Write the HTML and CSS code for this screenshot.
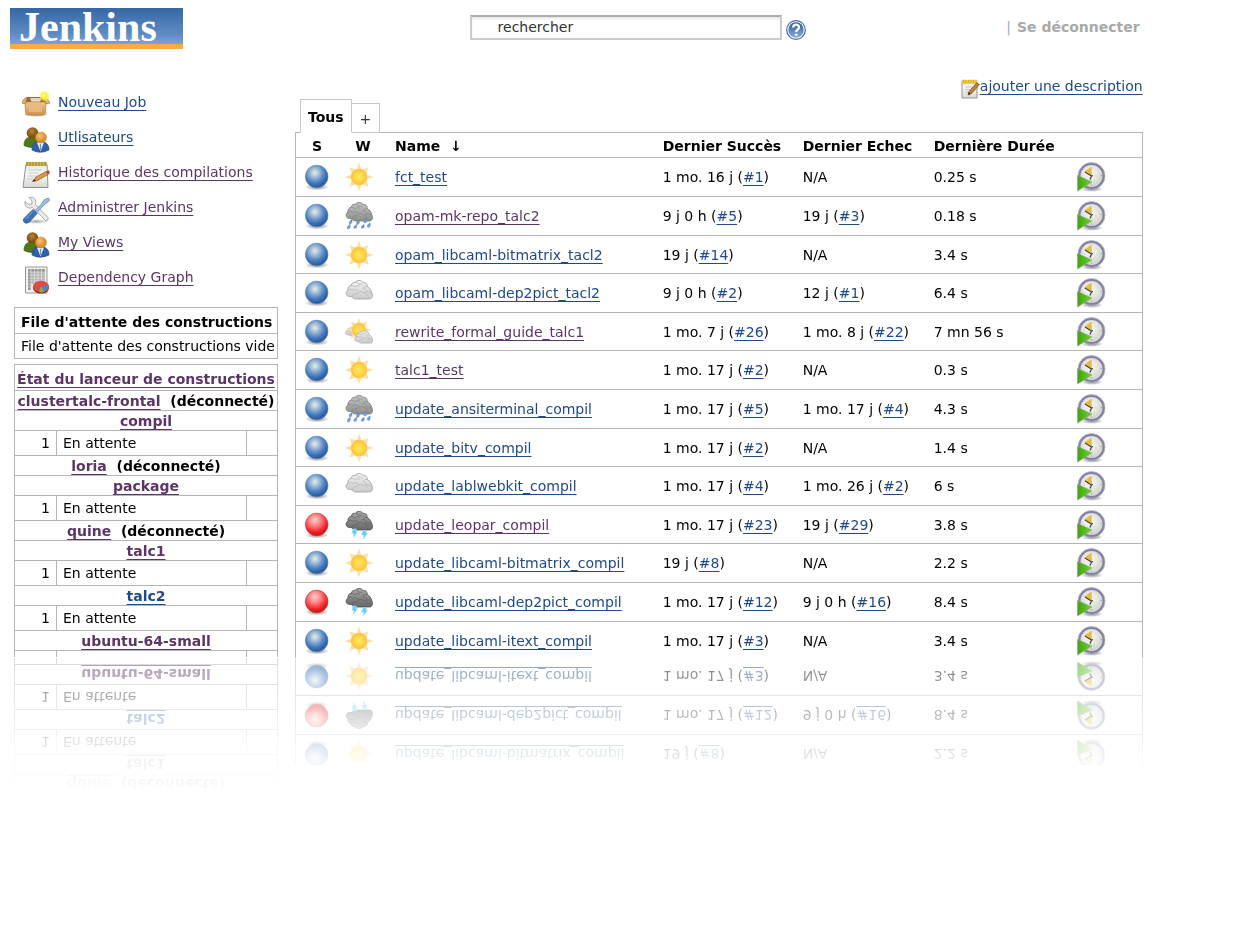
FILE: index.html
```
<!DOCTYPE html>
<html lang="fr">
<head>
<meta charset="utf-8">
<title>Tableau de bord [Jenkins]</title>
<link rel="stylesheet" href="styles.css">
</head>
<body>
<svg class="sprite" aria-hidden="true">
  <defs>
    <radialGradient id="g-blue" cx=".42" cy=".34" r=".62"><stop offset="0" stop-color="#e9eedd"/><stop offset=".3" stop-color="#a4bedb"/><stop offset=".7" stop-color="#4a7fc0"/><stop offset="1" stop-color="#295c9f"/></radialGradient>
    <radialGradient id="g-red" cx=".42" cy=".3" r=".65"><stop offset="0" stop-color="#ffd0d0"/><stop offset=".45" stop-color="#ff7a7a"/><stop offset=".8" stop-color="#f3282c"/><stop offset="1" stop-color="#cf1a1a"/></radialGradient>
    <radialGradient id="g-shadow"><stop offset="0" stop-color="#000" stop-opacity=".5"/><stop offset="1" stop-color="#000" stop-opacity="0"/></radialGradient>
    <radialGradient id="g-sun"><stop offset="0" stop-color="#ffe566"/><stop offset=".6" stop-color="#fdd845"/><stop offset="1" stop-color="#fbc238"/></radialGradient>
    <linearGradient id="g-light" x2="0" y2="1"><stop offset="0" stop-color="#f1f1f1"/><stop offset="1" stop-color="#c9c9c9"/></linearGradient>
    <linearGradient id="g-mid" x2="0" y2="1"><stop offset="0" stop-color="#c3c5c2"/><stop offset="1" stop-color="#8b8e8a"/></linearGradient>
    <linearGradient id="g-dark" x2="0" y2="1"><stop offset="0" stop-color="#a8a8a8"/><stop offset="1" stop-color="#666"/></linearGradient>
    <linearGradient id="g-box" x2="0" y2="1"><stop offset="0" stop-color="#edc68f"/><stop offset="1" stop-color="#cf924a"/></linearGradient>
    <linearGradient id="g-paper" x2="0" y2="1"><stop offset="0" stop-color="#e4e4e2"/><stop offset=".4" stop-color="#fafafa"/><stop offset="1" stop-color="#d5d5d2"/></linearGradient>
    <linearGradient id="g-help" x2="0" y2="1"><stop offset="0" stop-color="#2b5695"/><stop offset="1" stop-color="#8caede"/></linearGradient>
    <radialGradient id="g-face" cx=".45" cy=".4"><stop offset="0" stop-color="#fafaf8"/><stop offset="1" stop-color="#d6d6d0"/></radialGradient>
    <radialGradient id="g-head" cx=".4" cy=".35"><stop offset="0" stop-color="#f6c276"/><stop offset="1" stop-color="#d98f2c"/></radialGradient>
    <radialGradient id="g-head2" cx=".45" cy=".35"><stop offset="0" stop-color="#b9823c"/><stop offset="1" stop-color="#80500f"/></radialGradient>
    <linearGradient id="g-green" x2="1" y2="0"><stop offset="0" stop-color="#3fa30c"/><stop offset="1" stop-color="#6fd629"/></linearGradient>
  </defs>
  <symbol id="ball-blue" viewBox="0 0 28 28"><ellipse cx="14" cy="24" rx="12" ry="3.5" fill="url(#g-shadow)"/><circle cx="13.7" cy="13.5" r="11.3" fill="url(#g-blue)" stroke="#5a84b8" stroke-width=".7"/></symbol>
  <symbol id="ball-red" viewBox="0 0 28 28"><ellipse cx="14" cy="24" rx="12" ry="3.5" fill="url(#g-shadow)"/><circle cx="13.7" cy="13.5" r="11.3" fill="url(#g-red)" stroke="#c53737" stroke-width=".7"/></symbol>
  <symbol id="sun" viewBox="0 0 28 28"><path d="M14 .5 16.2 7 22.8 4.8 20.8 11.7 27.5 14 20.8 16.3 23.2 23.2 16.4 20.8 14 27.5 11.6 20.8 4.8 23.2 7.2 16.3 .5 14 7.2 11.7 5.2 4.8 11.8 7Z" fill="#fde2a2" stroke="#fbd68a" stroke-width=".5"/><circle cx="14" cy="14" r="7.8" fill="url(#g-sun)" stroke="#f8c252" stroke-width=".7"/></symbol>
  <symbol id="puff" viewBox="0 0 28 20"><path d="M4.5 16.500C.8 16.500-.2 11.800 3 10.200 2.400 7.400 4.200 5.500 6.200 5.300 6.600 2.600 8.900 2 10.300 2.400 11.800-.2 16.600-.2 17.700 2.300 20.600 2 22.500 3.700 22.200 6.500 25.600 8.200 26.600 11.500 27.400 14.500 28 17.900 26 19 24 19L11 19C8.500 19 7.500 18 7 16.700Z"/><path d="M3 10.200C5 9 7 9.200 8 10.500 9.700 9 12.500 9.500 13.200 11.500M6.200 5.300C8 5 9.500 6 10 7.200 11 5.500 13.500 5 15 6.500M10.300 2.400C12 2 13.500 3 13.800 4.500 15 3.500 17 4 17.500 5.500M22.200 6.500C20 6.200 18.500 7 18 8.500 20 8.500 21.500 10 21.500 12 24 11.500 26 12.500 27.200 14.500M7 16.700C7.500 14 10 13 12 14 13 11 17 10.500 18.500 12.500 20.500 12 22 13.500 22 15.500" fill="none" stroke-opacity=".6"/></symbol>
  <symbol id="cloudy" viewBox="0 0 28 28"><use href="#puff" y="1" width="28" height="20" fill="url(#g-light)" stroke="#a9a9a9" stroke-width=".9"/></symbol>
  <symbol id="rain" viewBox="0 0 28 28"><use href="#puff" width="28" height="20" fill="url(#g-mid)" stroke="#777a76" stroke-width=".8"/><g fill="#7aa3df" stroke="#4a78bd" stroke-width=".6"><path d="M7 17.500C3 20 4 22 5.500 21.800 7 21.500 7 20 7 17.500ZM14 18C10.500 20 11.500 22.500 13 22.300 14.500 22 14.400 20 14 18ZM21.500 16.500C18 18.500 18.500 21 20 20.800 22 20.500 21.700 18.500 21.500 16.500ZM5 22.500C1.500 24.500 2 27 3.500 26.800 5.500 26.500 5.200 24.500 5 22.500ZM11.500 22.500C8 24.500 8.500 26.500 10 26.300 12 26 11.800 24.500 11.500 22.500ZM19 22.500C15.500 24.300 16 26.500 17.500 26.300 19.500 26 19.200 24.500 19 22.500ZM25 21C21.500 23 22 25.500 23.500 25.300 25.500 25 25.200 23 25 21Z"/></g></symbol>
  <symbol id="storm" viewBox="0 0 28 28"><use href="#puff" width="28" height="20" fill="url(#g-dark)" stroke="#505050" stroke-width=".8"/><path d="M8 18 11.500 18 10.500 20.500 12.500 20.500 8.500 26.500 9 22.500 7 22.500ZM18 20 21.500 20 20.700 22 22.500 22 18.500 28 19 24 16.500 24Z" fill="#57cdf5" stroke="#a5e4fa" stroke-width=".6"/></symbol>
  <symbol id="partly" viewBox="0 0 28 28"><use href="#puff" x="0" y="8" width="13" height="11" fill="url(#g-light)" stroke="#a3a3a3" stroke-width="1.200"/><use href="#sun" x="2" y="0" width="24" height="24"/><use href="#puff" x="9" y="12" width="19" height="14" fill="url(#g-light)" stroke="#a9a9a9" stroke-width="1.100"/></symbol>
  <symbol id="clock" viewBox="0 0 30 30"><ellipse cx="16" cy="27" rx="11" ry="3" fill="url(#g-shadow)"/><circle cx="15.500" cy="14" r="12.300" fill="url(#g-face)" stroke="#8080a2" stroke-width="2.600"/><circle cx="15.500" cy="14" r="13.400" fill="none" stroke="#b3b3c8" stroke-width=".7"/><path d="M16 13.500 8.500 9.500 15.500 4.500Z" fill="#e3bd45"/><path d="M9 10 15.500 14 17 13.500M15.500 14 14 17.500" stroke="#444" stroke-width="1.200" fill="none"/><path d="M24.500 13.500h1.500M15.500 22.500v1.500" stroke="#aaa"/><path d="M1.500 13.500 16 20 1.500 29Z" fill="url(#g-green)" stroke="#8ea886" stroke-width=".7"/></symbol>
  <symbol id="package" viewBox="0 0 28 28"><ellipse cx="14" cy="23.500" rx="13" ry="2.500" fill="url(#g-shadow)"/><path d="M5 6 22 6 24 12 3 12Z" fill="#9c6a2c"/><path d="M8 7 19 7 18 12 10 12Z" fill="#ded8cb"/><path d="M3 11 24 11 23.500 22.500Q23 24 21 24L6 24Q4 24 3.500 22.500Z" fill="url(#g-box)" stroke="#b8854a" stroke-width=".7"/><path d="M5 6.500C2 7 1 9 0 12L3.500 13ZM22 6.500C25 7 26.500 9 28 12L24 13Z" fill="#dfb475" stroke="#a87433" stroke-width=".7"/><path d="M7 15H20V21H7Z" fill="#e9bf86" opacity=".7"/><circle cx="22.500" cy="5" r="5" fill="#fff34c" opacity=".65"/><circle cx="22.500" cy="5" r="3.200" fill="#fff22b"/><circle cx="22" cy="4.500" r="1.300" fill="#fffbd0"/></symbol>
  <symbol id="people" viewBox="0 0 28 28"><path d="M2 19.500C2 13.500 5 11 10 11S17 14 17 20Q9 23 2 19.500Z" fill="#52761b" stroke="#3c5812" stroke-width=".7"/><circle cx="10.500" cy="7" r="5.800" fill="url(#g-head2)"/><path d="M10 24C10 18 13 15.500 18.500 15.500S27 18.500 27 24Q18 28.500 10 24Z" fill="#2d62a9" stroke="#204a87" stroke-width=".7"/><path d="M15 16.500 18.500 25.500 22 16.500Z" fill="#e8eff8"/><path d="M18.500 18v6" stroke="#6d95cf" stroke-width="1.300"/><circle cx="19" cy="11.500" r="5.500" fill="url(#g-head)" stroke="#c98428" stroke-width=".5"/></symbol>
  <symbol id="notepad" viewBox="0 0 28 28"><path d="M4 3H25L26 26.500H1Z" fill="url(#g-paper)" stroke="#8f8f8b"/><path d="M4 1H25V5H4Z" fill="#cbb94b"/><path d="M5 .8V5M8 .8V5M11 .8V5M14 .8V5M17 .8V5M20 .8V5M23 .8V5" stroke="#8b7a22" stroke-width=".8"/><path d="M6.500 9H20M6 12H17M5.500 15H15M5 18H11" stroke="#c8c8c5"/><path d="M10.500 20.500 14 16 24 10.500 26 13.500 15.500 19.500Z" fill="#d89a45" stroke="#8f5b17" stroke-width=".7"/><path d="M24 10.500 26.500 9 28 12 26 13.500Z" fill="#c9473a"/><path d="M10.500 20.500 12.500 18 13.500 19.900Z" fill="#222"/></symbol>
  <symbol id="tools" viewBox="0 0 28 28"><ellipse cx="14" cy="25.500" rx="13" ry="2.500" fill="url(#g-shadow)" opacity=".7"/><path d="M7 1.500C12 0 15 4 13.500 8.500L26 21.500Q27 24.500 24 25L10.500 11.500C6 13.500 2 10.500 3 5.500L6.500 8.500 9.800 8 10 5Z" fill="#e9eae8" stroke="#999b98" stroke-width=".8"/><path d="M26.500 2 27.500 4.500 21 10 14.500 17 12.500 15 19 8.500 22.500 3.500Z" fill="#9fbbe0" stroke="#6488b8" stroke-width=".8"/><path d="M11 13.500 15 17.500 7.500 26Q4 28.500 2 26T3 21.500Z" fill="#3c73b8" stroke="#28588f" stroke-width=".8"/><path d="M10.500 15.500 4 23" stroke="#83aadc"/></symbol>
  <symbol id="graph" viewBox="0 0 28 28"><path d="M3.500 1H25V27H3.500Z" fill="#f1f1ef" stroke="#969693"/><path d="M6 3H23V18H6Z" fill="#b4b6b3"/><path d="M6 3H23V6H6ZM6 3H9V24H6Z" fill="#969895"/><path d="M9 3V24M12.500 3V24M16 3V24M19.500 3V24M6 6H23M6 9H23M6 12H23M6 15H23M6 18H23M6 21H14" stroke="#dededc" stroke-width=".7"/><ellipse cx="19" cy="22" rx="8" ry="5.500" fill="#9b1d1d"/><ellipse cx="19" cy="20.500" rx="8" ry="5.700" fill="#e34848"/><path d="M19 20.500 26.500 19Q27 23 22.500 25.500Z" fill="#4b86cb"/><path d="M19 20.500 22.500 25.500Q19.500 27 17 26Z" fill="#73b943"/></symbol>
  <symbol id="note-edit" viewBox="0 0 20 20"><path d="M1 2H16V19H1Z" fill="url(#g-paper)" stroke="#92928e"/><path d="M1 1H16V5H1Z" fill="#f2cf3a"/><path d="M2.500 .5V4M5 .5V4M7.500 .5V4M10 .5V4M12.500 .5V4M15 .5V4" stroke="#c9a320" stroke-width=".8"/><path d="M4 8H11M4 10.500H9M4 13H7" stroke="#c5c5c2"/><path d="M7 16 8 12.500 15.500 4 18.500 5.500 10.500 14.500Z" fill="#b88438" stroke="#7d5518" stroke-width=".8"/><path d="M7 16 8 13 9.500 14.800Z" fill="#222"/></symbol>
  <symbol id="help" viewBox="0 0 20 20"><circle cx="10" cy="10" r="9.300" fill="#fff" stroke="#476ca5" stroke-width="1.200"/><circle cx="10" cy="10" r="7.700" fill="url(#g-help)"/><path d="M7.200 7.500C7.200 3.800 13.200 3.800 13 7.400 12.900 9.600 10.200 9.800 10.200 12" fill="none" stroke="#fff" stroke-width="2.300"/><circle cx="10.200" cy="14.700" r="1.300" fill="#fff"/></symbol>
</svg>

<div class="page">
  <header class="header">
    <a class="logo" href="#">Jenkins</a>
    <form class="search">
      <input class="search-box" type="text" aria-label="rechercher" placeholder="rechercher">
      <a class="help" href="#" aria-label="Aide"><svg class="icon-help"><use href="#help"/></svg></a>
    </form>
    <div class="login"><span class="bar">|</span><a href="#">Se déconnecter</a></div>
  </header>

  <div class="columns">
    <aside class="sidebar mirrored mirrored-long">
      <nav class="tasks">
        <a class="task" href="#"><svg class="icon-task"><use href="#package"/></svg><span>Nouveau Job</span></a>
        <a class="task" href="#"><svg class="icon-task"><use href="#people"/></svg><span>Utlisateurs</span></a>
        <a class="task seen" href="#"><svg class="icon-task"><use href="#notepad"/></svg><span>Historique des compilations</span></a>
        <a class="task seen" href="#"><svg class="icon-task"><use href="#tools"/></svg><span>Administrer Jenkins</span></a>
        <a class="task seen" href="#"><svg class="icon-task"><use href="#people"/></svg><span>My Views</span></a>
        <a class="task seen" href="#"><svg class="icon-task"><use href="#graph"/></svg><span>Dependency Graph</span></a>
      </nav>

      <table class="pane queue">
        <thead><tr><th class="pane-title">File d'attente des constructions</th></tr></thead>
        <tbody><tr><td>File d'attente des constructions vide</td></tr></tbody>
      </table>

      <table class="pane executors">
        <colgroup><col class="col-num"><col><col class="col-stop"></colgroup>
        <thead><tr><th class="pane-title" colspan="3"><a class="seen" href="#">État du lanceur de constructions</a></th></tr></thead>
        <tbody>
          <tr><th class="node" colspan="3"><a class="seen" href="#">clustertalc-frontal</a>&nbsp; (déconnecté)</th></tr>
          <tr><th class="node" colspan="3"><a class="seen" href="#">compil</a></th></tr>
          <tr><td class="num">1</td><td>En attente</td><td></td></tr>
          <tr><th class="node" colspan="3"><a class="seen" href="#">loria</a>&nbsp; (déconnecté)</th></tr>
          <tr><th class="node" colspan="3"><a class="seen" href="#">package</a></th></tr>
          <tr><td class="num">1</td><td>En attente</td><td></td></tr>
          <tr><th class="node" colspan="3"><a class="seen" href="#">quine</a>&nbsp; (déconnecté)</th></tr>
          <tr><th class="node" colspan="3"><a class="seen" href="#">talc1</a></th></tr>
          <tr><td class="num">1</td><td>En attente</td><td></td></tr>
          <tr><th class="node" colspan="3"><a href="#">talc2</a></th></tr>
          <tr><td class="num">1</td><td>En attente</td><td></td></tr>
          <tr><th class="node" colspan="3"><a class="seen" href="#">ubuntu-64-small</a></th></tr>
          <tr class="cut"><td></td><td></td><td></td></tr>
        </tbody>
      </table>
    </aside>

    <main class="main mirrored">
      <div class="description"><a href="#"><svg class="icon-note"><use href="#note-edit"/></svg><span>ajouter une description</span></a></div>
      <div class="tabs">
        <a class="tab active" href="#">Tous</a>
        <a class="tab" href="#">+</a>
      </div>
      <table class="jobs">
        <colgroup><col class="col-s"><col class="col-w"><col><col class="col-ok"><col class="col-ko"><col class="col-time"><col class="col-run"></colgroup>
        <thead>
          <tr><th class="center">S</th><th class="center">W</th><th>Name &nbsp;↓</th><th>Dernier Succès</th><th>Dernier Echec</th><th>Dernière Durée</th><th></th></tr>
        </thead>
        <tbody>
          <tr><td class="center"><svg class="icon-ball"><use href="#ball-blue"/></svg></td><td><svg class="icon-job"><use href="#sun"/></svg></td><td><a href="#">fct_test</a></td><td>1 mo. 16 j (<a href="#">#1</a>)</td><td>N/A</td><td>0.25 s</td><td><a href="#" aria-label="Lancer"><svg class="icon-run"><use href="#clock"/></svg></a></td></tr>
          <tr><td class="center"><svg class="icon-ball"><use href="#ball-blue"/></svg></td><td><svg class="icon-job"><use href="#rain"/></svg></td><td><a class="seen" href="#">opam-mk-repo_talc2</a></td><td>9 j 0 h (<a href="#">#5</a>)</td><td>19 j (<a href="#">#3</a>)</td><td>0.18 s</td><td><a href="#" aria-label="Lancer"><svg class="icon-run"><use href="#clock"/></svg></a></td></tr>
          <tr><td class="center"><svg class="icon-ball"><use href="#ball-blue"/></svg></td><td><svg class="icon-job"><use href="#sun"/></svg></td><td><a href="#">opam_libcaml-bitmatrix_tacl2</a></td><td>19 j (<a href="#">#14</a>)</td><td>N/A</td><td>3.4 s</td><td><a href="#" aria-label="Lancer"><svg class="icon-run"><use href="#clock"/></svg></a></td></tr>
          <tr><td class="center"><svg class="icon-ball"><use href="#ball-blue"/></svg></td><td><svg class="icon-job"><use href="#cloudy"/></svg></td><td><a href="#">opam_libcaml-dep2pict_tacl2</a></td><td>9 j 0 h (<a href="#">#2</a>)</td><td>12 j (<a href="#">#1</a>)</td><td>6.4 s</td><td><a href="#" aria-label="Lancer"><svg class="icon-run"><use href="#clock"/></svg></a></td></tr>
          <tr><td class="center"><svg class="icon-ball"><use href="#ball-blue"/></svg></td><td><svg class="icon-job"><use href="#partly"/></svg></td><td><a class="seen" href="#">rewrite_formal_guide_talc1</a></td><td>1 mo. 7 j (<a href="#">#26</a>)</td><td>1 mo. 8 j (<a href="#">#22</a>)</td><td>7 mn 56 s</td><td><a href="#" aria-label="Lancer"><svg class="icon-run"><use href="#clock"/></svg></a></td></tr>
          <tr><td class="center"><svg class="icon-ball"><use href="#ball-blue"/></svg></td><td><svg class="icon-job"><use href="#sun"/></svg></td><td><a class="seen" href="#">talc1_test</a></td><td>1 mo. 17 j (<a href="#">#2</a>)</td><td>N/A</td><td>0.3 s</td><td><a href="#" aria-label="Lancer"><svg class="icon-run"><use href="#clock"/></svg></a></td></tr>
          <tr><td class="center"><svg class="icon-ball"><use href="#ball-blue"/></svg></td><td><svg class="icon-job"><use href="#rain"/></svg></td><td><a href="#">update_ansiterminal_compil</a></td><td>1 mo. 17 j (<a href="#">#5</a>)</td><td>1 mo. 17 j (<a href="#">#4</a>)</td><td>4.3 s</td><td><a href="#" aria-label="Lancer"><svg class="icon-run"><use href="#clock"/></svg></a></td></tr>
          <tr><td class="center"><svg class="icon-ball"><use href="#ball-blue"/></svg></td><td><svg class="icon-job"><use href="#sun"/></svg></td><td><a href="#">update_bitv_compil</a></td><td>1 mo. 17 j (<a href="#">#2</a>)</td><td>N/A</td><td>1.4 s</td><td><a href="#" aria-label="Lancer"><svg class="icon-run"><use href="#clock"/></svg></a></td></tr>
          <tr><td class="center"><svg class="icon-ball"><use href="#ball-blue"/></svg></td><td><svg class="icon-job"><use href="#cloudy"/></svg></td><td><a href="#">update_lablwebkit_compil</a></td><td>1 mo. 17 j (<a href="#">#4</a>)</td><td>1 mo. 26 j (<a href="#">#2</a>)</td><td>6 s</td><td><a href="#" aria-label="Lancer"><svg class="icon-run"><use href="#clock"/></svg></a></td></tr>
          <tr><td class="center"><svg class="icon-ball"><use href="#ball-red"/></svg></td><td><svg class="icon-job"><use href="#storm"/></svg></td><td><a class="seen" href="#">update_leopar_compil</a></td><td>1 mo. 17 j (<a href="#">#23</a>)</td><td>19 j (<a href="#">#29</a>)</td><td>3.8 s</td><td><a href="#" aria-label="Lancer"><svg class="icon-run"><use href="#clock"/></svg></a></td></tr>
          <tr><td class="center"><svg class="icon-ball"><use href="#ball-blue"/></svg></td><td><svg class="icon-job"><use href="#sun"/></svg></td><td><a href="#">update_libcaml-bitmatrix_compil</a></td><td>19 j (<a href="#">#8</a>)</td><td>N/A</td><td>2.2 s</td><td><a href="#" aria-label="Lancer"><svg class="icon-run"><use href="#clock"/></svg></a></td></tr>
          <tr><td class="center"><svg class="icon-ball"><use href="#ball-red"/></svg></td><td><svg class="icon-job"><use href="#storm"/></svg></td><td><a href="#">update_libcaml-dep2pict_compil</a></td><td>1 mo. 17 j (<a href="#">#12</a>)</td><td>9 j 0 h (<a href="#">#16</a>)</td><td>8.4 s</td><td><a href="#" aria-label="Lancer"><svg class="icon-run"><use href="#clock"/></svg></a></td></tr>
          <tr><td class="center"><svg class="icon-ball"><use href="#ball-blue"/></svg></td><td><svg class="icon-job"><use href="#sun"/></svg></td><td><a href="#">update_libcaml-itext_compil</a></td><td>1 mo. 17 j (<a href="#">#3</a>)</td><td>N/A</td><td>3.4 s</td><td><a href="#" aria-label="Lancer"><svg class="icon-run"><use href="#clock"/></svg></a></td></tr>
        </tbody>
      </table>
    </main>
  </div>
</div>
</body>
</html>
```
FILE: styles.css
```
* { box-sizing: border-box; }

body {
  margin: 0;
  min-height: 100vh;
  overflow: hidden;
  background: #fff;
  color: #000;
  font: 14px/18px Verdana, "DejaVu Sans", sans-serif;
}

a { color: #204a87; text-underline-offset: 3px; text-decoration-skip-ink: none; }
a.seen { color: #5c3566; }
svg { display: block; }
.sprite { position: absolute; width: 0; height: 0; }

.page { width: 92%; padding: 8px 11px 0 10px; }

.header {
  display: grid;
  grid-template-columns: 15fr auto 11fr;
  align-items: start;
  height: 62px;
}
.logo {
  justify-self: start;
  width: 173px;
  height: 41px;
  padding-left: 9px;
  border-bottom: 5px solid #fcab3c;
  background: linear-gradient(#3667a6, #5f8dc4 75%, #829fdb);
  color: #fff;
  font: bold 42px/38px "Liberation Serif", serif;
  text-decoration: none;
}
.search { display: flex; align-items: center; gap: 4px; padding: 6px 0 0; }
.search-box {
  width: 312px;
  height: 25px;
  padding: 0 26px;
  border: 2px solid #ccc;
  border-top-color: #aaafaa;
  box-shadow: inset 0 2px 2px #e8e8e8;
  font: inherit;
}
.search-box::placeholder { color: #333; opacity: 1; }
.help { padding-top: 6px; }
.icon-help { width: 20px; height: 20px; }
.login { justify-self: end; display: flex; gap: 6px; padding: 10px 3px 0 0; color: #a9a9a9; }
.login a { color: inherit; font-weight: bold; text-decoration: none; }

.columns { display: flex; align-items: flex-start; gap: 17px; padding-left: 4px; }
.sidebar { flex: 0 0 264px; min-width: 0; }
.main { flex: 1; }

.mirrored {
  -webkit-box-reflect: below 1px linear-gradient(transparent 82%, rgba(0, 0, 0, .08) 82%, rgba(0, 0, 0, .5));
}
.mirrored-long {
  -webkit-box-reflect: below 1px linear-gradient(transparent 76%, rgba(0, 0, 0, .08) 84%, rgba(0, 0, 0, .5));
}

.tasks { display: grid; gap: 7px; padding: 21px 0 13px 8px; }
.task { display: flex; gap: 8px; height: 28px; }
.task span { padding-top: 2px; }
.icon-task { width: 28px; height: 28px; }

.pane { width: 100%; border-collapse: collapse; table-layout: fixed; }
.pane th, .pane td { height: 25px; padding: 0 0 0 6px; border: 1px solid #b5b5b5; text-align: left; white-space: nowrap; }
.pane th.pane-title { height: 26px; padding-top: 3px; }
.pane .node { height: 20px; padding: 2px 0 0; line-height: 17px; text-align: center; }
.pane .num { padding-right: 6px; text-align: right; }
.pane .cut td { height: 6px; padding: 0; border-bottom: 0; }
.pane th.pane-title[colspan] { padding-left: 0; text-align: center; }
.queue { margin-bottom: 5px; }
.col-num { width: 42px; }
.col-stop { width: 31px; }

.description { display: flex; justify-content: flex-end; padding: 7px 0 0; }
.description a { display: flex; }
.icon-note { width: 20px; height: 20px; margin: 2px -1px 0 0; }
.tabs { display: flex; align-items: flex-end; margin: 0 0 -1px 5px; }
.tab {
  height: 30px;
  padding: 6px 8px 0;
  border: 1px solid #c8c8c8;
  border-left: 0;
  color: #333;
  text-decoration: none;
}
.tab.active {
  height: 34px;
  padding: 8px 7px 0;
  border-left: 1px solid #c8c8c8;
  border-bottom-color: #fff;
  color: #000;
  font-weight: bold;
  z-index: 1;
}

.jobs { width: 100%; table-layout: fixed; border-spacing: 0; border: 1px solid #b5b5b5; border-bottom: 0; }
.jobs th, .jobs td { padding: 0 7px; text-align: left; white-space: nowrap; }
.jobs th { height: 25px; padding-top: 2px; border-bottom: 1px solid #b5b5b5; }
.jobs td { height: 39px; border-bottom: 1px solid #b5b5b5; }
.jobs tr:nth-child(5n+3) td, .jobs tr:nth-child(5n) td { height: 38px; }
.jobs tbody tr:last-child td { height: 36px; padding-top: 2px; border-bottom: 0; }
.jobs .center { padding-left: 0; padding-right: 0; text-align: center; }
.jobs td.center svg { margin: auto; }
.col-s { width: 42px; }
.col-w { width: 50px; }
.col-ok { width: 140px; }
.col-ko { width: 131px; }
.col-time { width: 142px; }
.col-run { width: 73px; }
.icon-ball, .icon-job { width: 28px; height: 28px; }
.icon-run { width: 30px; height: 30px; }
```
